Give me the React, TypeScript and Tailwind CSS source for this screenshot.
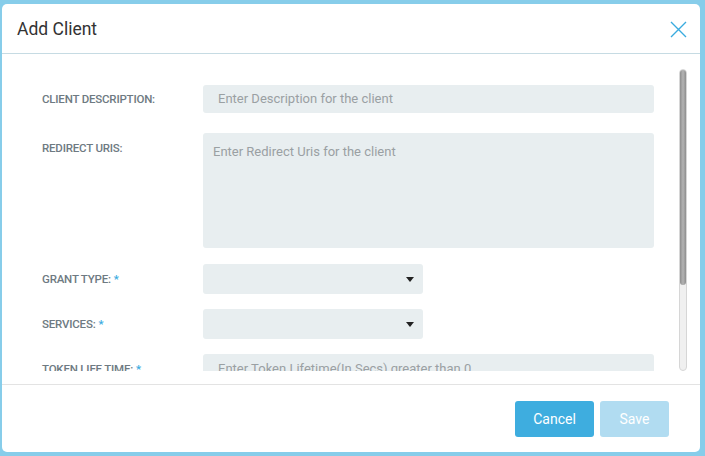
import React from 'react';

const labelCls =
  "w-[161px] shrink-0 text-[11.5px] font-medium uppercase tracking-[-0.2px] text-[#6e7a82] font-['Roboto',sans-serif]";
const inputCls =
  "w-[451px] rounded-[3px] bg-[#e8eef0] text-[13px] text-[#9aa0a3] font-['Roboto',sans-serif]";

function Required() {
  return <span className="ml-[3px] text-[#3aabdf]">*</span>;
}

function Caret() {
  return (
    <svg width="8" height="5" viewBox="0 0 8 5" className="shrink-0">
      <path d="M0 0h8L4 5z" fill="#222" />
    </svg>
  );
}

function SelectBox() {
  return (
    <div className="flex h-[30px] w-[220px] items-center justify-end rounded-[3px] bg-[#e8eef0] pr-[9px]">
      <Caret />
    </div>
  );
}

export default function App() {
  return (
    <div className="flex h-[456px] w-[705px] bg-[#87cdea] pb-[4px] pl-[2px] pr-[5px] pt-[4px]">
      <div className="flex flex-1 flex-col overflow-hidden rounded-[5px] bg-white">
        <div className="flex h-[50px] shrink-0 items-center justify-between border-b border-[#c6dbe3] pl-[15px] pr-[13px] pt-[2px]">
          <h2 className="text-[17.5px] text-[#333] font-['Roboto',sans-serif]">Add Client</h2>
          <svg width="17" height="17" viewBox="0 0 17 17">
            <path d="M1 1l15 15M16 1L1 16" stroke="#3aabdf" strokeWidth="1.4" fill="none" />
          </svg>
        </div>

        <div className="flex h-[330px] shrink-0 pb-[13px] pt-[15px]">
          <div className="flex-1 overflow-hidden">
            <div className="flex flex-col pl-[40px] pt-[16px]">
              <div className="flex items-center">
                <span className={`${labelCls} pt-[2px]`}>Client Description:</span>
                <div className={`${inputCls} flex h-[28px] items-center pl-[15px]`}>
                  Enter Description for the client
                </div>
              </div>

              <div className="mt-[20px] flex items-start">
                <span className={`${labelCls} pt-[7px]`}>Redirect Uris:</span>
                <div className={`${inputCls} h-[115px] pl-[10px] pt-[9px]`}>
                  Enter Redirect Uris for the client
                </div>
              </div>

              <div className="mt-[16px] flex items-center">
                <span className={`${labelCls} pt-[2px]`}>
                  Grant Type:
                  <Required />
                </span>
                <SelectBox />
              </div>

              <div className="mt-[15px] flex items-center">
                <span className={`${labelCls} pt-[2px]`}>
                  Services:
                  <Required />
                </span>
                <SelectBox />
              </div>

              <div className="mt-[15px] flex items-center">
                <span className={`${labelCls} pt-[2px]`}>
                  Token Life Time:
                  <Required />
                </span>
                <div className={`${inputCls} flex h-[30px] items-center pl-[15px]`}>
                  Enter Token Lifetime(In Secs) greater than 0
                </div>
              </div>
            </div>
          </div>

          {/* scrollbar */}
          <div className="mr-[13px] ml-[25px] flex w-[8px] flex-col rounded-full border border-[#d6d6d6] bg-[#f0f0f0]">
            <div className="h-[215px] rounded-full bg-gradient-to-r from-[#8e8e8e] via-[#b4b4b4] to-[#8e8e8e]" />
          </div>
        </div>

        <div className="flex flex-1 items-center justify-end gap-[6px] border-t border-[#e3e3e3] pr-[31px] pt-[1px] font-['Roboto',sans-serif]">
          <button className="h-[36px] w-[79px] rounded-[3px] bg-[#3eaddf] text-[14px] text-white">
            Cancel
          </button>
          <button className="h-[36px] w-[69px] rounded-[3px] bg-[#b1dcf1] text-[14px] text-white">
            Save
          </button>
        </div>
      </div>
    </div>
  );
}
